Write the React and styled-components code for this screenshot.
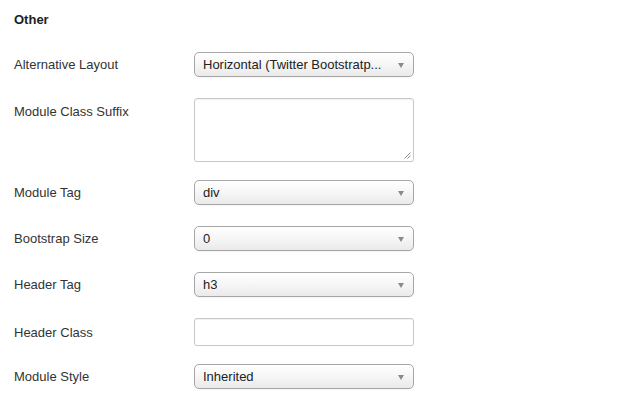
import React from "react";
import styled, { createGlobalStyle } from "styled-components";

const GlobalStyle = createGlobalStyle`
  html, body {
    margin: 0;
    padding: 0;
    background: #ffffff;
  }
  body {
    font-family: "Liberation Sans", Arial, Helvetica, sans-serif;
    font-size: 13px;
    color: #333333;
  }
`;

const rows = [
  { label: "Alternative Layout", type: "select", value: "Horizontal (Twitter Bootstratp..." },
  { label: "Module Class Suffix", type: "textarea" },
  { label: "Module Tag", type: "select", value: "div" },
  { label: "Bootstrap Size", type: "select", value: "0" },
  { label: "Header Tag", type: "select", value: "h3" },
  { label: "Header Class", type: "input" },
  { label: "Module Style", type: "select", value: "Inherited" },
];

const gaps = { select: "21px", textarea: "18px", input: "17px" };

const App = () => {
  return (
    <>
      <GlobalStyle />
      <Panel>
        <Heading>Other</Heading>
        <Form>
          {rows.map((row) => (
            <Row key={row.label} $gap={gaps[row.type]}>
              <Label $type={row.type}>{row.label}</Label>
              {row.type === "select" && (
                <Select>
                  <SelectText>{row.value}</SelectText>
                  <Caret />
                </Select>
              )}
              {row.type === "textarea" && (
                <TextArea>
                  <Grip width="7" height="7" viewBox="0 0 7 7">
                    <line x1="0.5" y1="6.5" x2="6.5" y2="0.5" stroke="#888" strokeWidth="1" />
                    <line x1="3.5" y1="6.5" x2="6.5" y2="3.5" stroke="#888" strokeWidth="1" />
                  </Grip>
                </TextArea>
              )}
              {row.type === "input" && <TextInput />}
            </Row>
          ))}
        </Form>
      </Panel>
    </>
  );
};

export default App;

const Panel = styled.div`
  width: 640px;
  height: 400px;
  padding: 12px 0 0 14px;
  box-sizing: border-box;
  overflow: hidden;
`;

const Heading = styled.h3`
  margin: 0;
  font-size: 13px;
  line-height: 16px;
  font-weight: bold;
  color: #222;
`;

const Form = styled.div`
  display: flex;
  flex-direction: column;
  margin-top: 24px;
`;

const Row = styled.div`
  display: grid;
  grid-template-columns: 180px 220px;
  align-items: start;
  margin-bottom: ${(p) => p.$gap};
`;

const Label = styled.div`
  color: #333;
  line-height: ${(p) => (p.$type === "input" ? "29px" : "25px")};
  padding-top: ${(p) => (p.$type === "textarea" ? "1px" : "0")};
`;

const Select = styled.div`
  position: relative;
  height: 25px;
  box-sizing: border-box;
  border: 1px solid #a6a6a6;
  border-radius: 5px;
  background: linear-gradient(#ffffff 0%, #f7f7f7 45%, #eaeaea 100%);
  display: flex;
  align-items: center;
  padding: 0 22px 0 8px;
  box-shadow: 0 1px 0 rgba(0, 0, 0, 0.04);
`;

const SelectText = styled.span`
  color: #222;
  white-space: nowrap;
  overflow: hidden;
  line-height: 16px;
  padding-top: 1px;
`;

const Caret = styled.span`
  position: absolute;
  right: 9px;
  top: 10px;
  width: 0;
  height: 0;
  border-left: 3.5px solid transparent;
  border-right: 3.5px solid transparent;
  border-top: 5px solid #8a8a8a;
`;

const TextArea = styled.div`
  position: relative;
  height: 64px;
  box-sizing: border-box;
  border: 1px solid #c8c8c8;
  border-radius: 3px;
  background: #fff;
  box-shadow: inset 0 1px 1px rgba(0, 0, 0, 0.06);
`;

const Grip = styled.svg`
  position: absolute;
  right: 2px;
  bottom: 2px;
`;

const TextInput = styled.div`
  height: 28px;
  box-sizing: border-box;
  border: 1px solid #c8c8c8;
  border-radius: 3px;
  background: #fff;
  box-shadow: inset 0 1px 1px rgba(0, 0, 0, 0.06);
`;
